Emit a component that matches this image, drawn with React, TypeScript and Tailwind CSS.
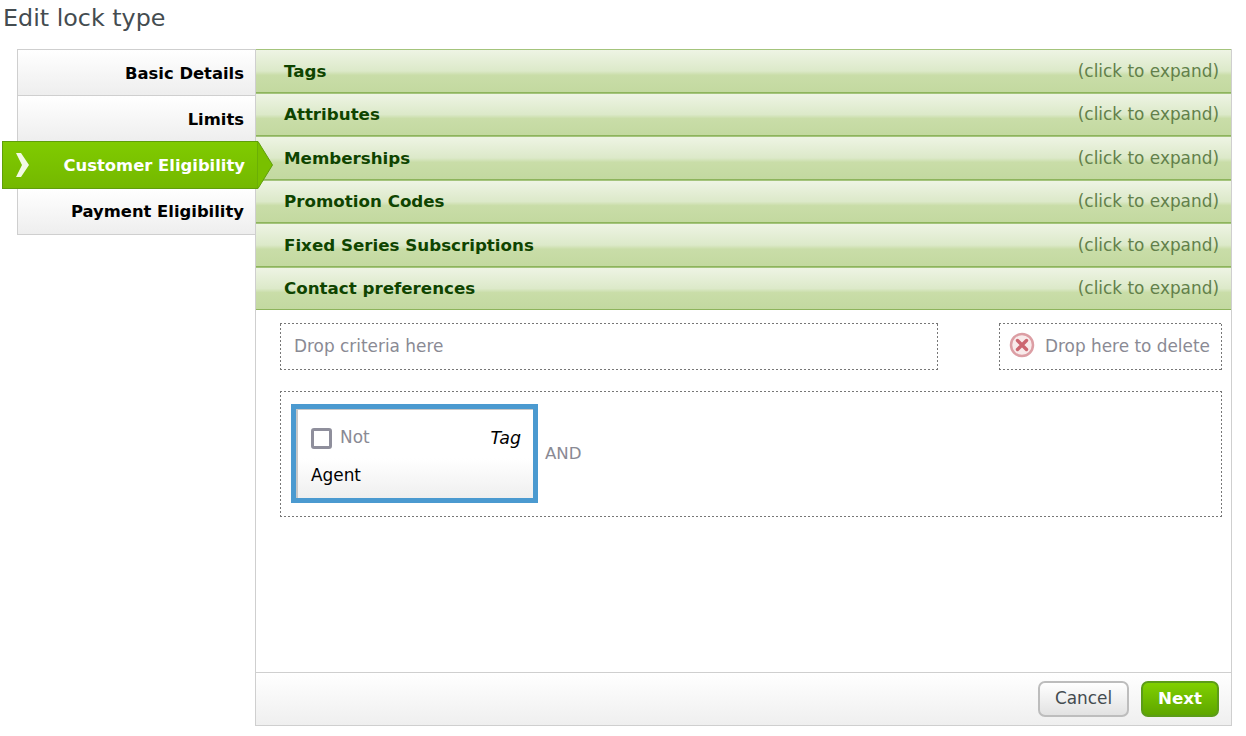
const font = { fontFamily: '"DejaVu Sans", Verdana, sans-serif' };

const sections = [
  'Tags',
  'Attributes',
  'Memberships',
  'Promotion Codes',
  'Fixed Series Subscriptions',
  'Contact preferences',
];

// 2px on, 2px off hairline round a box; CSS dotted at 1px comes out too dense
const dashed =
  '[background:repeating-linear-gradient(90deg,#777_0_2px,transparent_2px_4px)_top/100%_1px_no-repeat,repeating-linear-gradient(90deg,#777_0_2px,transparent_2px_4px)_bottom/100%_1px_no-repeat,repeating-linear-gradient(0deg,#777_0_2px,transparent_2px_4px)_left/1px_100%_no-repeat,repeating-linear-gradient(0deg,#777_0_2px,transparent_2px_4px)_right/1px_100%_no-repeat]';

function SideItem({ label, nudge }: { label: string; nudge?: boolean }) {
  return (
    <div
      className={`flex h-[46px] items-center justify-end border-x border-b border-[#cfcfcf] bg-gradient-to-b from-white to-[#eeeeee] pr-[11px] text-[16.4px] font-bold text-black ${
        nudge ? 'pt-[4px]' : 'pt-[2px]'
      }`}
    >
      {label}
    </div>
  );
}

function ActiveItem({ label }: { label: string }) {
  return (
    <div className="relative z-10 -mt-px -ml-[15px] flex h-[48px] w-[255px] items-center justify-end border-y border-l border-[#5f9e0a] bg-gradient-to-b from-[#80cb00] to-[#74b800] pr-3 pt-[2px] text-[16.4px] font-bold text-white">
      <svg className="absolute left-[13px] top-[11px]" width="13" height="24" viewBox="0 0 13 24">
        <path d="M0 0 L5 0 L13 12 L5 24 L0 24 L6 12 Z" fill="#f2f9e4" />
      </svg>
      {label}
      <svg className="absolute left-[254px] top-[-1px]" width="18" height="48" viewBox="0 0 18 48">
        <path d="M0 0.5 L1 0.5 L15.5 24 L1 47.5 L0 47.5 Z" fill="#79c000" stroke="#5f9e0a" />
      </svg>
    </div>
  );
}

function AccordionRow({ title }: { title: string }) {
  return (
    <div className="flex h-[43.5px] items-center justify-between border-t border-b border-t-[#a4c47c] border-b-[#8db45c] bg-[linear-gradient(#eef4e4_0%,#dce9c9_50%,#c9dda8_60%,#c3d9a0_100%)] pl-7 pr-3 pt-[1px]">
      <span className="text-[16.7px] font-bold text-[#0f4400]">{title}</span>
      <span className="text-[16.9px] text-[#62804a]">(click to expand)</span>
    </div>
  );
}

export default function App() {
  return (
    <div className="h-[736px] w-[1246px] overflow-hidden bg-white" style={font}>
      <h1 className="h-[49px] pl-[3px] pt-[2px] text-[23.8px] leading-[32px] text-[#444c50]">Edit lock type</h1>
      <div className="flex pl-[17px]">
        <div className="w-[239px] border-t border-[#cfcfcf]">
          <SideItem label="Basic Details" nudge />
          <SideItem label="Limits" nudge />
          <ActiveItem label="Customer Eligibility" />
          <SideItem label="Payment Eligibility" />
        </div>
        <div className="-ml-px flex h-[677px] w-[977px] flex-col border-x border-b border-[#cfcfcf]">
          <div>
            {sections.map((s) => (
              <AccordionRow key={s} title={s} />
            ))}
          </div>
          <div className="flex-1 pl-6 pr-[9px] pt-[13px]">
            <div className="flex gap-[61px]">
              <div className={`flex h-[47px] w-[658px] items-center pl-[14px] text-[16.9px] text-[#8a8a94] ${dashed}`}>
                Drop criteria here
              </div>
              <div className={`flex h-[47px] w-[223px] items-center gap-[10px] pl-[10px] text-[16.9px] text-[#8a8a94] ${dashed}`}>
                <svg className="-mt-[3px]" width="26" height="26" viewBox="0 0 26 26">
                  <circle cx="13" cy="13" r="11" fill="#f8eaea" stroke="#dc9ea4" strokeWidth="2.5" />
                  <path d="M8.5 8.5 L17.5 17.5 M17.5 8.5 L8.5 17.5" stroke="#cc6670" strokeWidth="3.4" strokeLinecap="round" />
                </svg>
                Drop here to delete
              </div>
            </div>
            <div className={`mt-[21px] flex h-[126px] items-center pl-[11px] ${dashed}`}>
              <div className="mb-px h-[99px] w-[247px] border-[5px] border-[#4b9ad0]">
                <div className="h-full border-l-2 border-t border-[#c8c8c8] bg-[linear-gradient(#ffffff_55%,#efefef_100%)] pl-[13px] pr-3">
                  <div className="flex items-center justify-between pt-[15px]">
                    <div className="flex items-center gap-2 text-[16.9px] text-[#8a8a94]">
                      <span className="h-[21px] w-[21px] rounded-[3px] border-[3px] border-[#8f8f9c] bg-white" />
                      Not
                    </div>
                    <span className="text-[17.4px] italic text-black">Tag</span>
                  </div>
                  <div className="pt-[14px] text-[16.9px] leading-[20px] text-black">Agent</div>
                </div>
              </div>
              <span className="ml-[7px] text-[16.6px] text-[#8a8a94]">AND</span>
            </div>
          </div>
          <div className="flex h-[53px] items-center justify-end gap-3 border-t border-[#cfcfcf] bg-gradient-to-b from-white to-[#efefef] pr-3">
            <button className="h-[36px] w-[91px] rounded-[7px] border-2 border-[#bdbdbd] bg-gradient-to-b from-white to-[#e2e2e2] text-[16.9px] text-[#444c50]">
              Cancel
            </button>
            <button className="h-[36px] w-[78px] rounded-[7px] border-2 border-[#5c9c18] bg-gradient-to-b from-[#80d000] to-[#5ea600] text-[16.7px] font-bold text-white">
              Next
            </button>
          </div>
        </div>
      </div>
    </div>
  );
}
